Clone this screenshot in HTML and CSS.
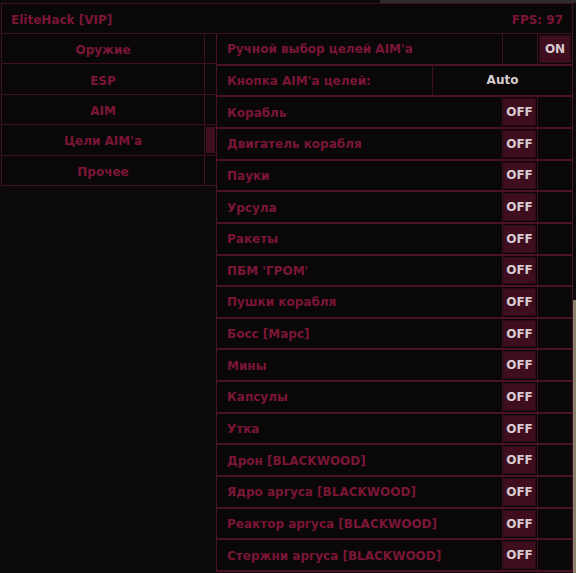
FILE: index.html
```html
<!DOCTYPE html>
<html lang="ru">
<head>
<meta charset="utf-8">
<title>EliteHack</title>
<link rel="stylesheet" href="styles.css">
</head>
<body>
<div class="app">
  <header class="titlebar"><span class="title">EliteHack [VIP]</span><span class="fps">FPS: 97</span></header>
  <div class="main">
    <nav class="menu">
      <div class="tab"><span class="tab-label">Оружие</span><span class="tab-mark"></span></div>
      <div class="tab"><span class="tab-label">ESP</span><span class="tab-mark"></span></div>
      <div class="tab"><span class="tab-label">AIM</span><span class="tab-mark"></span></div>
      <div class="tab tab-active"><span class="tab-label">Цели AIM'a</span><span class="tab-mark"><span class="thumb"></span></span></div>
      <div class="tab"><span class="tab-label">Прочее</span><span class="tab-mark"></span></div>
    </nav>
    <section class="panel">
      <div class="row"><span class="label">Ручной выбор целей AIM'a</span><span class="cell"></span><span class="cell cell-last"><span class="btn">ON</span></span></div>
      <div class="row"><span class="label label-key">Кнопка AIM'a целей:</span><span class="value">Auto</span></div>
      <div class="row"><span class="label">Корабль</span><span class="cell"><span class="btn">OFF</span></span><span class="cell cell-last"></span></div>
      <div class="row"><span class="label">Двигатель корабля</span><span class="cell"><span class="btn">OFF</span></span><span class="cell cell-last"></span></div>
      <div class="row"><span class="label">Пауки</span><span class="cell"><span class="btn">OFF</span></span><span class="cell cell-last"></span></div>
      <div class="row"><span class="label">Урсула</span><span class="cell"><span class="btn">OFF</span></span><span class="cell cell-last"></span></div>
      <div class="row"><span class="label">Ракеты</span><span class="cell"><span class="btn">OFF</span></span><span class="cell cell-last"></span></div>
      <div class="row"><span class="label">ПБМ 'ГРОМ'</span><span class="cell"><span class="btn">OFF</span></span><span class="cell cell-last"></span></div>
      <div class="row"><span class="label">Пушки корабля</span><span class="cell"><span class="btn">OFF</span></span><span class="cell cell-last"></span></div>
      <div class="row"><span class="label">Босс [Марс]</span><span class="cell"><span class="btn">OFF</span></span><span class="cell cell-last"></span></div>
      <div class="row"><span class="label">Мины</span><span class="cell"><span class="btn">OFF</span></span><span class="cell cell-last"></span></div>
      <div class="row"><span class="label">Капсулы</span><span class="cell"><span class="btn">OFF</span></span><span class="cell cell-last"></span></div>
      <div class="row"><span class="label">Утка</span><span class="cell"><span class="btn">OFF</span></span><span class="cell cell-last"></span></div>
      <div class="row"><span class="label">Дрон [BLACKWOOD]</span><span class="cell"><span class="btn">OFF</span></span><span class="cell cell-last"></span></div>
      <div class="row"><span class="label">Ядро аргуса [BLACKWOOD]</span><span class="cell"><span class="btn">OFF</span></span><span class="cell cell-last"></span></div>
      <div class="row"><span class="label">Реактор аргуса [BLACKWOOD]</span><span class="cell"><span class="btn">OFF</span></span><span class="cell cell-last"></span></div>
      <div class="row"><span class="label">Стержни аргуса [BLACKWOOD]</span><span class="cell"><span class="btn">OFF</span></span><span class="cell cell-last"></span></div>
    </section>
  </div>
</div>
</body>
</html>
```

FILE: styles.css
```css
html, body {
  margin: 0;
  padding: 0;
}
body {
  width: 576px;
  height: 573px;
  overflow: hidden;
  background:
    linear-gradient(to right, transparent 573px, #8a806c 573px) 0 300px / 100% 273px no-repeat,
    linear-gradient(to right, transparent 380px, #2e2a29 380px) 0 0 / 100% 3px no-repeat,
    #0c0a0b;
  font-family: "DejaVu Sans", "Liberation Sans", sans-serif;
  font-weight: bold;
  font-size: 12px;
  color: #7b1636;
}
.app {
  margin: 3px 0 0 1px;
  width: 572px;
}
.titlebar {
  box-sizing: border-box;
  height: 31px;
  border: 1px solid #3f0f22;
  background: #0a0708;
  display: flex;
  align-items: center;
  justify-content: space-between;
  padding: 3px 9px 0 9px;
}
.main {
  display: flex;
  align-items: flex-start;
}
.menu {
  width: 215px;
  height: 152px;
  display: grid;
  grid-template-rows: repeat(5, 1fr);
}
.tab {
  display: flex;
  border-bottom: 1px solid #3f0f22;
  background: #0a0708;
}
.tab-label {
  box-sizing: border-box;
  width: 204px;
  border-left: 1px solid #3f0f22;
  border-right: 1px solid #3f0f22;
  display: flex;
  align-items: center;
  justify-content: center;
  padding-top: 3px;
}
.tab-mark {
  flex: 1;
  display: flex;
  padding: 2px 1px 2px 1px;
}
.thumb {
  flex: 1;
  background: #3e0e1f;
}
.panel {
  box-sizing: border-box;
  width: 357px;
  height: 538px;
  border-left: 1px solid #4a1129;
  border-right: 1px solid #4a1129;
  background: #0a0708;
  display: grid;
  grid-template-rows: repeat(17, 1fr);
}
.row {
  display: flex;
  border-bottom: 2px solid #4a1129;
}
.label {
  box-sizing: border-box;
  width: 286px;
  border-right: 1px solid #3f0f22;
  display: flex;
  align-items: center;
  padding: 1px 0 0 10px;
}
.label-key {
  width: 216px;
}
.cell {
  box-sizing: border-box;
  width: 35px;
  border-right: 1px solid #3f0f22;
  display: flex;
  padding: 1px 1px 1px 0;
}
.cell-last {
  width: 34px;
  border-right: none;
  padding: 1px 1px 1px 1px;
}
.btn {
  flex: 1;
  display: flex;
  align-items: center;
  justify-content: center;
  background: #3e0e1f;
  border: 1px solid #2c0a15;
  color: #d9cbcf;
}
.value {
  flex: 1;
  display: flex;
  align-items: center;
  justify-content: center;
  color: #d6ccd0;
}
```
